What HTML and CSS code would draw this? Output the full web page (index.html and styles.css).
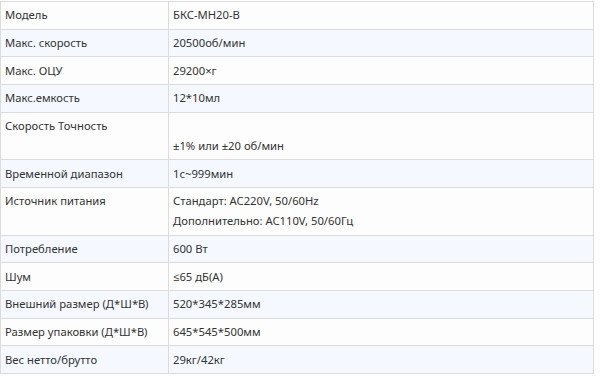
FILE: index.html
```html
<!DOCTYPE html>
<html lang="ru">
<head>
<meta charset="utf-8">
<title>Спецификация</title>
<link rel="stylesheet" href="styles.css">
</head>
<body>
<table class="spec">
  <tbody>
    <tr><td class="k">Модель</td><td class="v">БКС-МН20-В</td></tr>
    <tr><td class="k">Макс. скорость</td><td class="v">20500об/мин</td></tr>
    <tr><td class="k">Макс. ОЦУ</td><td class="v">29200×г</td></tr>
    <tr><td class="k">Макс.емкость</td><td class="v">12*10мл</td></tr>
    <tr><td class="k">Скорость Точность</td><td class="v"><br>±1% или ±20 об/мин</td></tr>
    <tr><td class="k">Временной диапазон</td><td class="v">1с~999мин</td></tr>
    <tr><td class="k">Источник питания</td><td class="v">Стандарт: AC220V, 50/60Hz<br>Дополнительно: AC110V, 50/60Гц</td></tr>
    <tr><td class="k">Потребление</td><td class="v">600 Вт</td></tr>
    <tr><td class="k">Шум</td><td class="v">≤65 дБ(А)</td></tr>
    <tr><td class="k">Внешний размер (Д*Ш*В)</td><td class="v">520*345*285мм</td></tr>
    <tr><td class="k">Размер упаковки (Д*Ш*В)</td><td class="v">645*545*500мм</td></tr>
    <tr><td class="k">Вес нетто/брутто</td><td class="v">29кг/42кг</td></tr>
  </tbody>
</table>
</body>
</html>
```
FILE: styles.css
```css
html, body {
  margin: 0;
  padding: 0;
  background: #ffffff;
}
body {
  padding-top: 1px;
  font-family: "Noto Sans", "Open Sans", "Liberation Sans", sans-serif;
  font-size: 11.25px;
  color: #333333;
}
.spec {
  width: 594px;
  border-collapse: collapse;
  table-layout: fixed;
}
.spec td {
  border: 1px solid #dcdcdc;
  padding: 3.33px 4px;
  line-height: 20px;
  vertical-align: top;
  text-align: left;
}
.spec td.k {
  width: 159px;
}
.spec tr:nth-child(odd) td {
  background: #fdfdfd;
}
.spec tr:nth-child(even) td {
  background: #f5f9ff;
}
```
